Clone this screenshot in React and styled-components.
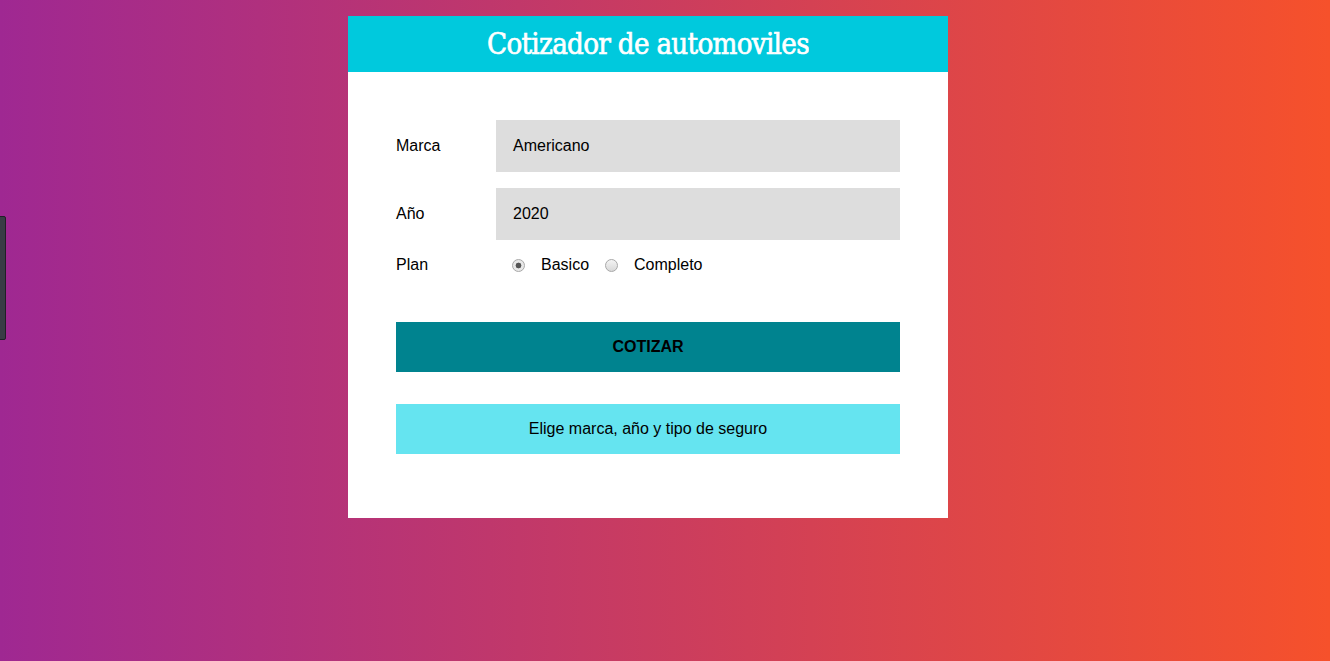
import React from "react";
import styled, { createGlobalStyle } from "styled-components";

const Global = createGlobalStyle`
  html, body { margin: 0; padding: 0; height: 100%; }
  body {
    background: linear-gradient(to right, #9f2892, #f6512b);
    font-family: "Liberation Sans", Arial, sans-serif;
    font-size: 16px;
    min-height: 661px;
  }
`;

const Page = styled.div`
  display: flex;
  justify-content: center;
  padding: 16px 34px 0 0;
`;

const Card = styled.div`
  width: 600px;
  background: #fff;
`;

const Header = styled.header`
  background: #00c9dd;
  height: 56px;
  display: flex;
  align-items: center;
  justify-content: center;
`;

const Title = styled.h1`
  margin: 0;
  color: #fff;
  font-family: "DejaVu Serif", serif;
  font-weight: 400;
  font-size: 30px;
  letter-spacing: -0.8px;
  line-height: 1;
  -webkit-text-stroke: 0.7px #fff;
  white-space: nowrap;
  transform: scaleX(0.875);
`;

const Form = styled.form`
  padding: 48px 48px 64px;
`;

const Field = styled.div`
  display: flex;
  align-items: center;
  margin-bottom: 16px;
`;

const Label = styled.label`
  flex: 0 0 100px;
  color: #000;
`;

const SelectBox = styled.div`
  flex: 1;
  height: 52px;
  box-sizing: border-box;
  background: #dddddd;
  padding: 0 17px;
  display: flex;
  align-items: center;
  color: #000;
`;

const Radio = styled.span`
  display: inline-block;
  width: 11px;
  height: 11px;
  margin: 0 16px;
  border-radius: 50%;
  border: 1px solid #a8a8a8;
  background: ${(p) => (p.checked ? "radial-gradient(circle, #555 0 2.6px, #e8e8e8 3.2px)" : "linear-gradient(#f4f4f4, #d8d8d8)")};
  box-sizing: content-box;
`;

const RadioText = styled.span`
  color: #000;
`;

const Button = styled.div`
  margin-top: 48px;
  height: 50px;
  background: #00838f;
  color: #000;
  font-weight: 700;
  text-transform: uppercase;
  display: flex;
  align-items: center;
  justify-content: center;
`;

const Message = styled.div`
  margin-top: 32px;
  height: 50px;
  background: #65e4f0;
  color: #000;
  display: flex;
  align-items: center;
  justify-content: center;
`;

const SideHandle = styled.div`
  position: fixed;
  left: -3px;
  top: 216px;
  width: 7px;
  height: 122px;
  background: #393c45;
  border: 1px solid #1f2026;
  border-radius: 0 2px 2px 0;
`;

export default function App() {
  return (
    <>
      <Global />
      <SideHandle />
      <Page>
        <Card>
          <Header>
            <Title>Cotizador de automoviles</Title>
          </Header>
          <Form>
            <Field>
              <Label>Marca</Label>
              <SelectBox>Americano</SelectBox>
            </Field>
            <Field>
              <Label>Año</Label>
              <SelectBox>2020</SelectBox>
            </Field>
            <Field>
              <Label>Plan</Label>
              <Radio checked />
              <RadioText>Basico</RadioText>
              <Radio />
              <RadioText>Completo</RadioText>
            </Field>
            <Button>Cotizar</Button>
            <Message>Elige marca, año y tipo de seguro</Message>
          </Form>
        </Card>
      </Page>
    </>
  );
}
